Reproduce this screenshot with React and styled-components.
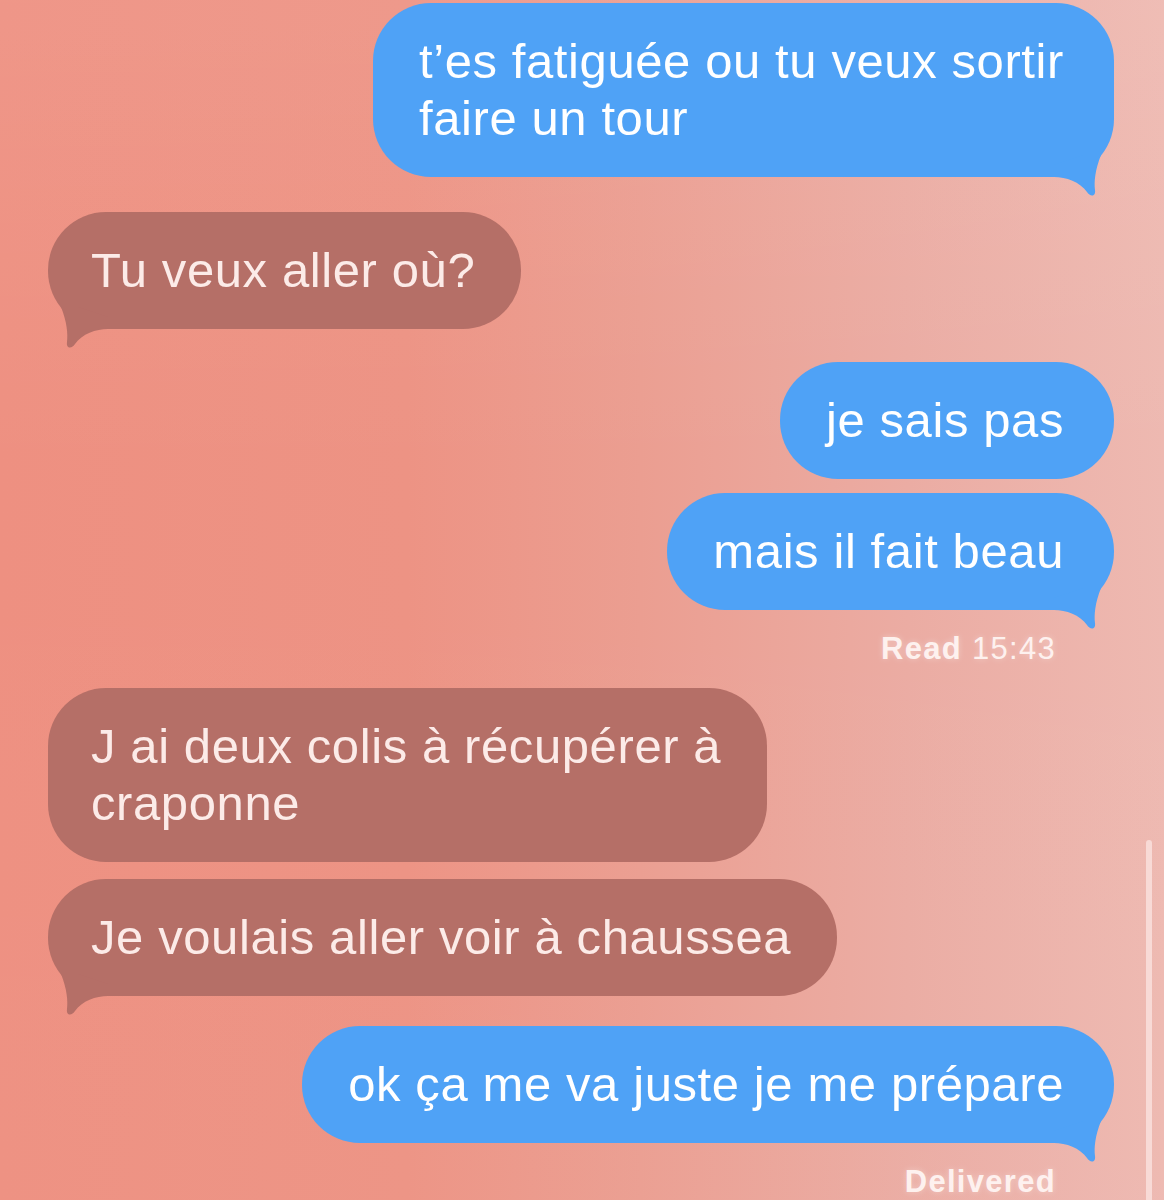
import React from 'react'
import styled, { createGlobalStyle } from 'styled-components'

const messages = [
    { id: 1, side: 'out', gap: 3, lines: ['t’es fatiguée ou tu veux sortir', 'faire un tour'], tail: true },
    { id: 2, side: 'in', gap: 35, lines: ['Tu veux aller où?'], tail: true },
    { id: 3, side: 'out', gap: 33, lines: ['je sais pas'] },
    { id: 4, side: 'out', gap: 14, lines: ['mais il fait beau'], tail: true, status: { bold: 'Read', rest: ' 15:43' } },
    { id: 5, side: 'in', gap: 22, lines: ['J ai deux colis à récupérer à', 'craponne'] },
    { id: 6, side: 'in', gap: 17, lines: ['Je voulais aller voir à chaussea'], tail: true },
    { id: 7, side: 'out', gap: 30, lines: ['ok ça me va juste je me prépare'], tail: true, status: { bold: 'Delivered' } },
]

function Tail({ side }) {
    return (
        <TailSvg $side={side} width="60" height="60" viewBox="0 0 60 60">
            <path d="M0 28 L0 40 C12 40 26 45 33 55 C36 60 42 60 41 53 C40 45 41 33 47 18 L30 18 Z" />
        </TailSvg>
    )
}

function App() {
    return (
        <Page>
            <GlobalStyle />
            <Thread>
                {messages.map(msg => (
                    <React.Fragment key={msg.id}>
                        <Row $side={msg.side} $gap={msg.gap}>
                            <Bubble $side={msg.side}>
                                {msg.lines.map((line, i) => (
                                    <Line key={i}>{line}</Line>
                                ))}
                                {msg.tail && <Tail side={msg.side} />}
                            </Bubble>
                        </Row>
                        {msg.status && (
                            <Status>
                                <b>{msg.status.bold}</b>
                                {msg.status.rest}
                            </Status>
                        )}
                    </React.Fragment>
                ))}
            </Thread>
            <ScrollThumb />
        </Page>
    )
}

export default App

const GlobalStyle = createGlobalStyle`
    html, body {
        margin: 0;
        padding: 0;
    }
    body {
        font-family: "Liberation Sans", Arial, sans-serif;
        -webkit-font-smoothing: antialiased;
    }
`

const Page = styled.div`
    position: relative;
    width: 1164px;
    height: 1200px;
    overflow: hidden;
    background:
        linear-gradient(180deg, rgba(255, 255, 255, 0.06) 0%, rgba(255, 255, 255, 0) 40%, rgba(255, 255, 255, 0.02) 100%),
        linear-gradient(90deg, #ee9081 0%, #ed9384 35%, #eb9e91 55%, #ebaca3 78%, #eeb9b1 100%);
`

const Thread = styled.div`
    display: flex;
    flex-direction: column;
    padding: 0 50px 0 48px;
`

const Row = styled.div`
    display: flex;
    justify-content: ${p => p.$side === 'out' ? 'flex-end' : 'flex-start'};
    margin-top: ${p => p.$gap}px;
`

const Bubble = styled.div`
    position: relative;
    padding: ${p => p.$side === 'out' ? '30px 50px 30px 46px' : '30px 46px 30px 43px'};
    border-radius: 58px;
    font-size: 49px;
    line-height: 57px;
    letter-spacing: 0.6px;
    white-space: nowrap;
    background: ${p => p.$side === 'out' ? '#4fa2f6' : '#b56f67'};
    color: ${p => p.$side === 'out' ? '#ffffff' : '#fcebe8'};
    fill: ${p => p.$side === 'out' ? '#4fa2f6' : '#b56f67'};
`

const Line = styled.div``

const TailSvg = styled.svg`
    position: absolute;
    bottom: -20px;
    ${p => p.$side === 'out' ? 'right: 0;' : 'left: 0; transform: scaleX(-1);'}
`

const Status = styled.div`
    align-self: flex-end;
    margin-top: 22px;
    padding-right: 58px;
    font-size: 31px;
    line-height: 34px;
    letter-spacing: 1.3px;
    color: rgba(255, 245, 243, 0.95);
    text-shadow: 0 0 6px rgba(255, 255, 255, 0.35);

    b {
        font-weight: 700;
    }
`

const ScrollThumb = styled.div`
    position: absolute;
    right: 12px;
    top: 840px;
    bottom: -10px;
    width: 6px;
    border-radius: 3px;
    background: rgba(255, 240, 238, 0.6);
`
